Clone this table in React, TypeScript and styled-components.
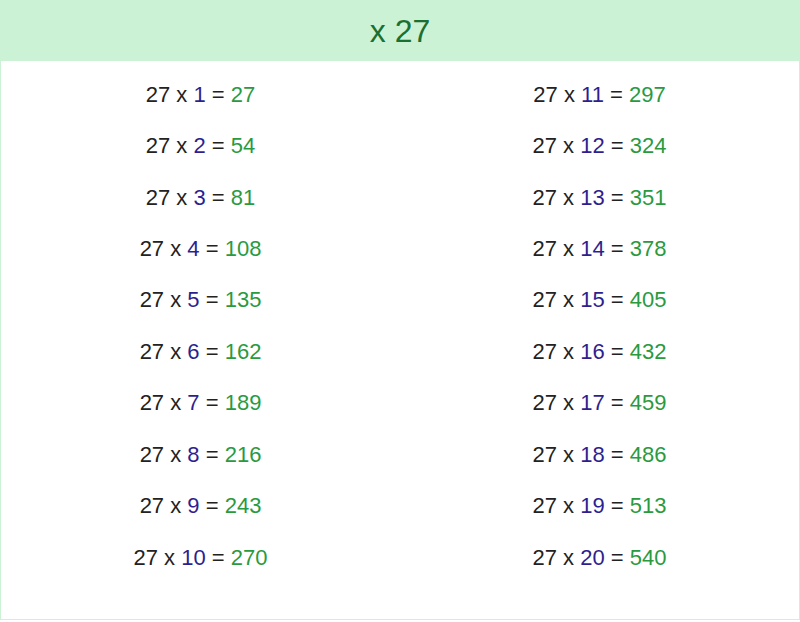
import React from "react";
import styled, { createGlobalStyle } from "styled-components";

const Global = createGlobalStyle`
  html, body { margin: 0; padding: 0; background: #ffffff; }
  body { font-family: "Liberation Sans", Arial, sans-serif; }
`;

const Card = styled.div`
  box-sizing: border-box;
  width: 800px;
  height: 620px;
  border: 1px solid #ccf2d6;
  border-top: none;
  background: #ffffff;
  display: flex;
  flex-direction: column;
`;

const Header = styled.div`
  height: 61px;
  background: #ccf2d6;
  display: flex;
  align-items: center;
  justify-content: center;
  margin: 0 -1px;
`;

const Title = styled.h1`
  margin: 0;
  font-family: "Liberation Sans", Arial, sans-serif;
  font-weight: normal;
  font-size: 32px;
  color: #1b6f30;
  padding-top: 2px;
`;

const Columns = styled.div`
  display: grid;
  grid-template-columns: 1fr 1fr;
  padding-top: 8px;
`;

const Column = styled.div`
  display: flex;
  flex-direction: column;
`;

const Row = styled.div`
  height: 51.45px;
  display: flex;
  align-items: center;
  justify-content: center;
  font-size: 22px;
  color: #222222;
  white-space: pre;
`;

const Factor = styled.span`
  color: #2e1f8f;
`;

const Result = styled.span`
  color: #2a9a3f;
`;

const BASE = 27;

function Line({ n }: { n: number }) {
  return (
    <Row>
      {`${BASE} x `}
      <Factor>{n}</Factor>
      {" = "}
      <Result>{BASE * n}</Result>
    </Row>
  );
}

export default function App() {
  const left = Array.from({ length: 10 }, (_, i) => i + 1);
  const right = Array.from({ length: 10 }, (_, i) => i + 11);
  return (
    <>
      <Global />
      <Card>
        <Header>
          <Title>x {BASE}</Title>
        </Header>
        <Columns>
          <Column>
            {left.map((n) => (
              <Line key={n} n={n} />
            ))}
          </Column>
          <Column>
            {right.map((n) => (
              <Line key={n} n={n} />
            ))}
          </Column>
        </Columns>
      </Card>
    </>
  );
}
